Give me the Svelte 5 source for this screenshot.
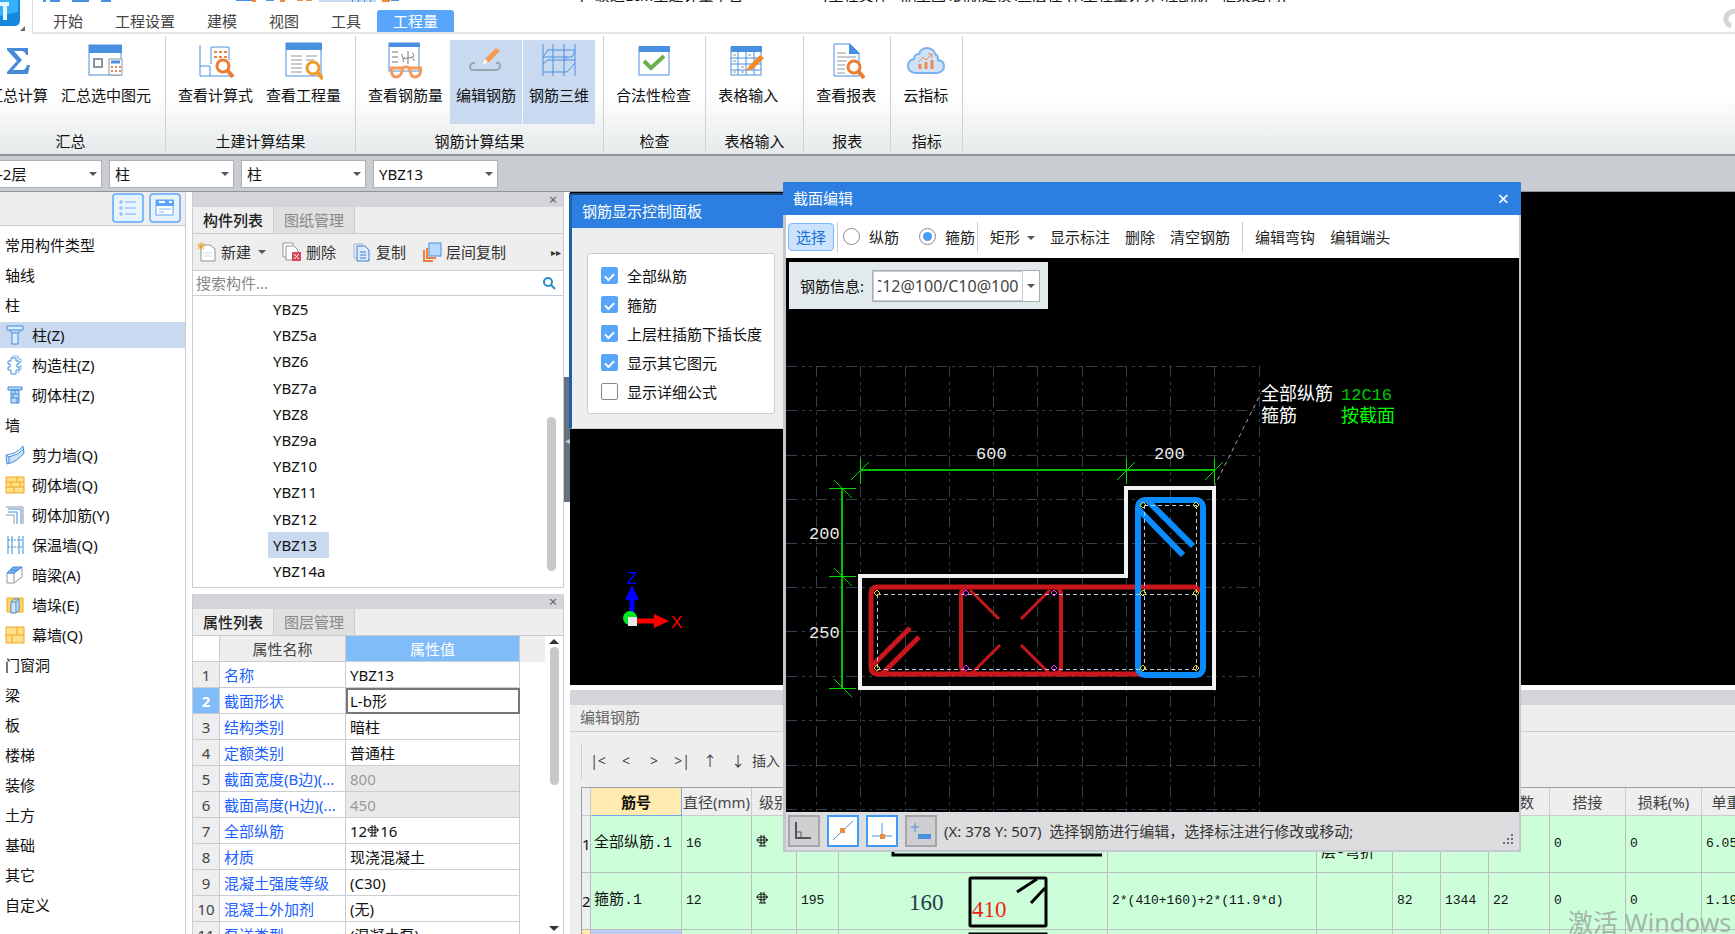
<script>
    import { onMount } from 'svelte'

    const tabs = ['开始', '工程设置', '建模', '视图', '工具', '工程量']

    const ribbon = [
        { title: '汇总', items: [['sigma', '汇总计算'], ['sumSel', '汇总选中图元']] },
        { title: '土建计算结果', items: [['formula', '查看计算式'], ['quantity', '查看工程量']] },
        { title: '钢筋计算结果', items: [['glasses', '查看钢筋量'], ['editBar', '编辑钢筋', true], ['bar3d', '钢筋三维', true]] },
        { title: '检查', items: [['check', '合法性检查']] },
        { title: '表格输入', wide: true, items: [['table', '表格输入']] },
        { title: '报表', items: [['report', '查看报表']] },
        { title: '指标', items: [['cloud', '云指标']] }
    ]

    const filters = [
        ['楼层', '-2层'],
        ['类别', '柱'],
        ['构件类型', '柱'],
        ['构件', 'YBZ13']
    ]

    const nav = [
        { text: '常用构件类型' },
        { text: '轴线' },
        { text: '柱' },
        { text: '柱(Z)', icon: 'col', active: true },
        { text: '构造柱(Z)', icon: 'tieCol' },
        { text: '砌体柱(Z)', icon: 'brickCol' },
        { text: '墙' },
        { text: '剪力墙(Q)', icon: 'shear' },
        { text: '砌体墙(Q)', icon: 'brick' },
        { text: '砌体加筋(Y)', icon: 'reinf' },
        { text: '保温墙(Q)', icon: 'insul' },
        { text: '暗梁(A)', icon: 'beam' },
        { text: '墙垛(E)', icon: 'pier' },
        { text: '幕墙(Q)', icon: 'curtain' },
        { text: '门窗洞' },
        { text: '梁' },
        { text: '板' },
        { text: '楼梯' },
        { text: '装修' },
        { text: '土方' },
        { text: '基础' },
        { text: '其它' },
        { text: '自定义' }
    ]

    const members = ['YBZ5', 'YBZ5a', 'YBZ6', 'YBZ7a', 'YBZ8', 'YBZ9a', 'YBZ10', 'YBZ11', 'YBZ12', 'YBZ13', 'YBZ14a']

    const props = [
        ['名称', 'YBZ13'],
        ['截面形状', 'L-b形'],
        ['结构类别', '暗柱'],
        ['定额类别', '普通柱'],
        ['截面宽度(B边)(...', '800', true],
        ['截面高度(H边)(...', '450', true],
        ['全部纵筋', '12', false, '16'],
        ['材质', '现浇混凝土'],
        ['混凝土强度等级', '(C30)'],
        ['混凝土外加剂', '(无)'],
        ['泵送类型', '(混凝土泵)']
    ]

    let layers = $state([
        { text: '全部纵筋', on: true },
        { text: '箍筋', on: true },
        { text: '上层柱插筋下插长度', on: true },
        { text: '显示其它图元', on: true },
        { text: '显示详细公式', on: false }
    ])

    let selected = $state('YBZ13')
    let barType = $state('箍筋')
    let barInfo = $state('C12@100/C10@100')
    let infoNode

    const gridX = [816, 860, 905, 949, 993, 1037, 1082, 1126, 1170, 1214, 1259]
    const gridY = [366, 410, 455, 499, 543, 587, 631, 676, 720, 765, 809]
    const corners = [[877, 593], [877, 668], [1143, 505], [1196, 505], [1143, 593], [1196, 593], [1143, 668], [1196, 668]]
    const middles = [[966, 593], [1054, 593], [966, 668], [1054, 668]]

    // keep the end of the rebar text in view, the box is narrower than it
    onMount(() => {
        infoNode.scrollLeft = infoNode.scrollWidth
    })
</script>

{#snippet glass(x, y, r, c)}
    <circle cx={x} cy={y} r={r} fill="#fff" stroke={c} stroke-width="3" />
    <path d="M{x + r - 1} {y + r - 1}l5 6" stroke={c} stroke-width="4" />
{/snippet}

{#snippet ribbonIcon(name)}
    <svg class="big-icon" viewBox="0 0 38 38" fill="none" aria-hidden="true">
        {#if name === 'sigma'}
            <path d="M8 6H29V13H27C26 10 25 9 22 9H15L23 18L14 28H23C26 28 27 26 28 23H31L29 32H8V30L18 19L8 8Z" fill="#4a8bd8" />
        {:else if name === 'sumSel'}
            <rect x="2" y="3" width="32" height="30" fill="#fff" stroke="#4a90e0" />
            <rect x="2" y="3" width="33" height="8" fill="#4a90e0" />
            <rect x="7" y="17" width="8" height="8" stroke="#8c969e" stroke-width="2" />
            <rect x="22" y="17" width="13" height="16" fill="#fff" stroke="#8c969e" />
            <path d="M24 20H33" stroke="#4a90e0" stroke-width="3" />
            <path d="M24 25h2m2 0h2m2 0h2m-10 4h2m2 0h2m2 0h2" stroke="#e08a60" stroke-width="2" />
        {:else if name === 'formula'}
            <path d="M3 3V34H34V32M3 24H13V34M14 22V5H32V18" stroke="#4a90e0" />
            <path d="M17 10h3m2 0h3m2 0h3m-13 5h3m2 0h3m2 0h3" stroke="#f08040" stroke-width="2" />
            {@render glass(26, 24, 6, '#ee7b30')}
        {:else if name === 'quantity'}
            <rect x="1" y="1" width="35" height="33" fill="#fff" stroke="#4a90e0" />
            <rect x="1" y="1" width="36" height="7" fill="#4a90e0" />
            <path d="M6 14H17M21 14H32M6 18H17M21 18H29M6 22H17M6 26H17M6 30H17" stroke="#8c969e" />
            {@render glass(28, 26, 6, '#f09a28')}
        {:else if name === 'glasses'}
            <rect x="2" y="1" width="30" height="28" fill="#fff" stroke="#4a90e0" />
            <rect x="2" y="1" width="31" height="4" fill="#4a90e0" />
            <path d="M5 10H11M5 15H11M5 20H11M21 9V22M15 12C15 17 17 17 21 16S27 15 27 19M17 20C15 18 16 15 18 16M25 11C28 12 27 16 24 15" stroke="#6e7880" />
            <path d="M3 26H15Q19 24 23 26H35M4 27L5 32Q6 35 9 35T14 32L16 27M22 27L24 32Q25 35 28 35T33 32L34 27" stroke="#f59a5a" stroke-width="3" />
        {:else if name === 'editBar'}
            <path d="M8 21H6Q3 22 3 25T7 28H28Q33 28 33 24T29 21" stroke="#9aa5b2" stroke-width="2" />
            <path d="M15 22L18 17L29 6L33 9L22 20Z" fill="#f59a55" />
            <path d="M15 23L18 17L21 20Z" fill="#fff" />
        {:else if name === 'bar3d'}
            <path d="M3 2V34M13 2V34M24 2V34M35 2V34M7 8H35M3 15H32L35 9M3 22L8 18H35M3 30H27L35 21M3 15L8 8M27 15L24 19" stroke="#4a90e0" />
        {:else if name === 'check'}
            <rect x="4" y="5" width="30" height="28" fill="#fff" stroke="#4a90e0" />
            <rect x="4" y="4" width="31" height="6" fill="#4a90e0" />
            <path d="M9 19L16 26L29 14" stroke="#6aaf50" stroke-width="4" />
        {:else if name === 'table'}
            <rect x="2" y="5" width="30" height="28" fill="#fff" stroke="#4a90e0" />
            <rect x="2" y="4" width="31" height="6" fill="#4a90e0" />
            <path d="M2 16H32M2 22H32M2 28H32M9 10V33M17 10V33M25 10V33" stroke="#4a90e0" />
            <path d="M4 13h3m12 0h3m-18 6h3m5 6h3m-11 5h3m5 0h3" stroke="#8c969e" />
            <path d="M17 29L20 24L31 13L35 16L24 27Z" fill="#f08a24" />
        {:else if name === 'report'}
            <path d="M7 2H23L32 11V34H7Z" fill="#fff" stroke="#4a90e0" />
            <path d="M22 1V12H33Z" fill="#4a90e0" />
            <path d="M10 11H19M10 15H29M10 19H20M10 23H18M10 27H18M10 31H18" stroke="#8c969e" />
            {@render glass(27, 25, 6, '#ee7b30')}
        {:else}
            <path d="M8 31Q1 30 1 24T7 17Q7 12 12 12Q14 6 20 6T29 13Q31 13 31 18Q37 19 37 24T31 31Z" fill="#cfe2f8" stroke="#7db1ee" stroke-width="2" />
            <path d="M13 27V22M19 27V20M25 27V18" stroke="#ee8a50" stroke-width="3" />
            <path d="M12 20L16 15L19 18L25 12M21 12H25V16" stroke="#ee8a50" />
        {/if}
    </svg>
{/snippet}

{#snippet navIcon(name)}
    <svg class="nav-icon" viewBox="0 0 20 20" fill="none" stroke="#3f8ddb" aria-hidden="true">
        {#if name === 'col'}
            <path d="M2 1H18V5H2ZM7 8H13V19H7ZM4 5L7 8M16 5L13 8" fill="#dcebfb" />
        {:else if name === 'tieCol'}
            <path d="M6 3H11V6H14V9H12V12H14V15H11V19H6V15H3V12H5V9H3V6H6Z" fill="#fff" />
            <path d="M6 3L8 1H13V4H16V7L14 9M14 12L16 10V14L13 18" stroke="#7db1ee" />
        {:else if name === 'brickCol'}
            <path d="M3 2H17V5H3ZM6 5H14V18H6ZM6 9H14M6 13H14M10 5V9M8 9V13M12 13V18" fill="#bcd9f8" />
        {:else if name === 'shear'}
            <path d="M1 10Q12 9 18 1L19 8Q12 17 2 19ZM1 10L4 12Q13 10 19 4M4 12V18" fill="#cfe2f8" />
        {:else if name === 'brick'}
            <path d="M1 2H19V18H1ZM1 7H19M1 12H19M12 2V7M6 7V12M15 7V12M9 12V18" fill="#ffe08a" stroke="#f3a51c" />
        {:else if name === 'reinf'}
            <path d="M1 2H18V19M1 10H9V19" stroke="#8c969e" />
            <path d="M3 4H16V19M3 7H12V19" />
        {:else if name === 'insul'}
            <path d="M3 1V19M7 1V19M14 1V19M18 1V19" />
            <path d="M3 5H18M3 12H18" stroke-dasharray="2 1" />
        {:else if name === 'beam'}
            <path d="M2 8H9V18H2ZM9 8L17 2V12L9 18" fill="#fff" stroke="#8c969e" />
            <path d="M2 8L8 2H17L9 8ZM6 5H13" fill="#7db1ee" />
        {:else if name === 'pier'}
            <path d="M2 3H18V17H2Z" fill="#ffd463" stroke="#f3a51c" />
            <path d="M6 7L9 4H14V15L11 18H6ZM11 7V18M6 7H11L14 4" fill="#cfe2f8" />
        {:else}
            <path d="M1 2H19V18H1ZM1 10H19M12 2V10M7 10V18" fill="#ffe08a" stroke="#f3a51c" />
        {/if}
    </svg>
{/snippet}

{#snippet rebar()}
    <svg class="rebar" viewBox="0 0 13 13" fill="none" stroke="#111" aria-label="HRB400">
        <path d="M5 1V12M8 1V12M3 12H10" />
        <ellipse cx="6" cy="6" rx="5" ry="3" />
        <path d="M1 6H12" />
    </svg>
{/snippet}

{#snippet dockTabs(a, b)}
    <div class="dock-head"><button class="dock-close" aria-label="关闭">×</button></div>
    <div class="dock-tabs">
        <button class="dock-tab on">{a}</button>
        <button class="dock-tab">{b}</button>
    </div>
{/snippet}

<div class="app">
    <header>
        <div class="titlebar">
            <svg class="quick" viewBox="0 0 410 2" aria-hidden="true">
                <path d="M319 0H376V2H319Z" fill="#c8d9f0" />
                <path d="M43 0h3v2h-3zM50 0h10v2h-10zM72 0h17v2h-17zM101 0h10v2h-10zM236 0h16v1h-16zM266 0h8v1h-8zM352 0h1v2h-1zM358 0h1v2h-1zM364 0h1v2h-1zM370 0h1v2h-1zM391 0h8v1h-8z" fill="#4a90e0" />
                <path d="M252 0h4v2h-4zM280 0h5v2h-5zM297 0h6v1h-6zM306 0h6v1h-6zM382 0h8v2h-8z" fill="#f08a3c" />
            </svg>
            <span class="title">广联达BIM土建计量平台</span>
            <span>[工程文件 - 施工图\钢筋建模\三层住宅\工程量计算\柱配筋 - 框架结构]</span>
        </div>
        <div class="tabs">
            {#each tabs as tab}
                <button class="tab" class:on={tab === '工程量'}>{tab}</button>
            {/each}
            <svg class="help" viewBox="0 0 12 24" fill="none" aria-hidden="true">
                <path d="M12 3Q3 4 3 11Q3 16 8 18" stroke="#d5d5d5" stroke-width="5" />
            </svg>
        </div>
        <svg class="logo" viewBox="0 0 32 34" aria-hidden="true">
            <path d="M0 0H20V20Q20 26 14 26H0Z" fill="#1687dc" />
            <path d="M0 0H18V12L0 16Z" fill="#36b1f5" />
            <path d="M0 2H9V6H7V20H3V6H0Z" fill="#e4f6ff" />
            <path d="M25 26V31H20Z" fill="#666" />
        </svg>
    </header>

    <div class="ribbon">
        {#each ribbon as group}
            <section class="group" class:wide={group.wide}>
                <div class="group-items">
                    {#each group.items as [icon, label, on]}
                        <button class="tool" class:on>
                            {@render ribbonIcon(icon)}
                            <span>{label}</span>
                        </button>
                    {/each}
                </div>
                <div class="group-title">{group.title}</div>
            </section>
        {/each}
    </div>

    <div class="filters">
        {#each filters as [name, value]}
            <div class="select">
                <select aria-label={name}><option>{value}</option></select>
            </div>
        {/each}
    </div>

    <main>
        <nav>
            <div class="nav-head">
                <button aria-label="列表视图">
                    <svg viewBox="0 0 20 20" fill="none" stroke="#6fb0f8" aria-hidden="true">
                        <path d="M7 4H18M7 10H18M7 16H18" />
                        <path d="M2 3h2v2h-2zM2 9h2v2h-2zM2 15h2v2h-2z" />
                    </svg>
                </button>
                <button aria-label="窗口视图">
                    <svg viewBox="0 0 20 20" fill="none" aria-hidden="true">
                        <rect x="1" y="2" width="17" height="15" fill="#fff" stroke="#58a5fb" />
                        <path d="M1 5H19" stroke="#58a5fb" stroke-width="6" />
                        <path d="M4 4h6m4 0h3" stroke="#fff" stroke-width="2" />
                        <path d="M4 11H16M4 14H9" stroke="#7db8fa" />
                    </svg>
                </button>
            </div>
            <ul>
                {#each nav as item}
                    <li class:active={item.active}>
                        {#if item.icon}{@render navIcon(item.icon)}{/if}
                        <span>{item.text}</span>
                    </li>
                {/each}
            </ul>
        </nav>

        <aside>
            <section class="dock members">
                {@render dockTabs('构件列表', '图纸管理')}
                <div class="dock-tools">
                    <button>
                        <svg viewBox="0 0 20 20" fill="none" aria-hidden="true">
                            <path d="M4 3H13L18 7V19H4Z" fill="#fff" stroke="#8c969e" />
                            <path d="M7 11H15M7 14H15" stroke="#d5d9dc" />
                            <path d="M4 0V8M0 4H8M1 1L7 7M7 1L1 7" stroke="#f59a1c" />
                        </svg>新建<i class="caret"></i>
                    </button>
                    <button>
                        <svg viewBox="0 0 20 20" fill="none" aria-hidden="true">
                            <path d="M4 15H1V1H11V3M4 4H12L16 8V18H4Z" fill="#fff" stroke="#8c969e" />
                            <rect x="10" y="10" width="9" height="9" fill="#d8485a" />
                            <path d="M12 12L17 17M17 12L12 17" stroke="#fff" />
                        </svg>删除
                    </button>
                    <button>
                        <svg viewBox="0 0 20 20" fill="none" stroke="#3c7fd6" aria-hidden="true">
                            <path d="M5 16H2V2H11" stroke="#9cb8dc" />
                            <path d="M5 4H13L17 8V19H5Z" fill="#dcebfb" />
                            <path d="M8 10H14M8 13H14M8 16H14" />
                        </svg>复制
                    </button>
                    <button>
                        <svg viewBox="0 0 20 20" fill="none" aria-hidden="true">
                            <path d="M2 8V19H11M5 6V16H14" stroke="#f08040" stroke-width="2" />
                            <rect x="7" y="1" width="12" height="13" fill="#b9d8fb" stroke="#4a90e0" />
                        </svg>层间复制
                    </button>
                    <span class="more">▸▸</span>
                </div>
                <label class="search">
                    <input type="text" placeholder="搜索构件..." aria-label="搜索构件" />
                    <svg viewBox="0 0 14 14" fill="none" stroke="#2d8cc8" stroke-width="2" aria-hidden="true">
                        <circle cx="6" cy="6" r="4" />
                        <path d="M9 9L13 13" />
                    </svg>
                </label>
                <div class="member-body">
                    <ul>
                        {#each members as m}
                            <li><button class:on={m === selected} onclick={() => (selected = m)}>{m}</button></li>
                        {/each}
                    </ul>
                    <div class="scroll"><i></i></div>
                </div>
            </section>

            <section class="dock props">
                {@render dockTabs('属性列表', '图层管理')}
                <div class="props-body">
                    <div class="props-main">
                        <table>
                            <thead>
                                <tr><th class="no"></th><th class="key">属性名称</th><th class="val">属性值</th><th></th></tr>
                            </thead>
                            <tbody>
                                {#each props as [key, val, locked, tail], i}
                                    <tr class:on={i === 1}>
                                        <td class="no">{i + 1}</td>
                                        <td class="key">{key}</td>
                                        <td class="val" class:locked>{val}{#if tail}{@render rebar()}{tail}{/if}</td>
                                        <td class="blank"></td>
                                    </tr>
                                {/each}
                            </tbody>
                        </table>
                    </div>
                    <div class="props-scroll">
                        <b class="up"></b>
                        <i></i>
                        <b class="down"></b>
                    </div>
                </div>
            </section>
        </aside>

        <div class="splitter"><button aria-label="收起">◂</button></div>

        <div class="stage">
            <div class="viewport">
                <svg class="axis" viewBox="0 0 70 70" fill="none" aria-hidden="true">
                    <text x="14" y="16" fill="#0000ff">Z</text>
                    <path d="M19 54V30" stroke="#0000ff" stroke-width="5" />
                    <path d="M12 32L19 17L26 32Z" fill="#0000ff" />
                    <circle cx="17" cy="50" r="7" fill="#00e820" />
                    <path d="M22 53H42" stroke="#ff0000" stroke-width="5" />
                    <path d="M41 46L56 53L41 60Z" fill="#ff0000" />
                    <rect x="15" y="49" width="9" height="9" fill="#e8e8e8" />
                    <text x="58" y="60" fill="#ff0000">X</text>
                </svg>
            </div>

            <section class="editor">
                <div class="dock-head"></div>
                <div class="editor-title">编辑钢筋</div>
                <div class="editor-tools">
                    <button>|&lt;</button>
                    <button>&lt;</button>
                    <button>&gt;</button>
                    <button>&gt;|</button>
                    <button>↑</button>
                    <button>↓</button>
                    <button>插入</button>
                </div>
                <div class="sheet">
                    <table>
                        <colgroup>
                            <col class="w-no" /><col class="w-name" /><col class="w-dia" /><col class="w-grade" /><col class="w-code" />
                            <col class="w-shape" /><col class="w-formula" /><col class="w-desc" /><col class="w-len" /><col class="w-len" />
                            <col class="w-count" /><col class="w-desc" /><col class="w-desc" /><col class="w-desc" />
                        </colgroup>
                        <thead>
                            <tr>
                                <th></th><th class="name">筋号</th><th>直径(mm)</th><th>级别</th><th>图号</th><th>图形</th><th>计算公式</th>
                                <th>公式描述</th><th>弯曲</th><th>长度</th><th>根数</th><th>搭接</th><th>损耗(%)</th><th>单重(kg)</th>
                            </tr>
                        </thead>
                        <tbody>
                            <tr>
                                <td class="no">1</td><td class="name">全部纵筋.1</td><td>16</td><td>{@render rebar()}</td><td></td>
                                <td class="shape">
                                    <svg viewBox="0 0 268 56" fill="none" aria-hidden="true"><path d="M54 36V39H263" stroke="#000" stroke-width="3" /></svg>
                                </td>
                                <td></td><td class="desc">层高-本<br />层-弯折</td><td></td><td></td><td></td><td>0</td><td>0</td><td>6.05</td>
                            </tr>
                            <tr>
                                <td class="no">2</td><td class="name">箍筋.1</td><td>12</td><td>{@render rebar()}</td><td>195</td>
                                <td class="shape">
                                    <svg viewBox="0 0 268 56" fill="none" stroke="#000" stroke-width="3">
                                        <rect x="131" y="5" width="76" height="48" rx="1" />
                                        <path d="M178 19L198 6M206 15L192 30" />
                                        <text x="70" y="37" stroke="none" fill="#223a4a">160</text>
                                        <text x="133" y="44" stroke="none" fill="#f02020">410</text>
                                    </svg>
                                </td>
                                <td>2*(410+160)+2*(11.9*d)</td><td></td><td>82</td><td>1344</td><td>22</td><td>0</td><td>0</td><td>1.193</td>
                            </tr>
                            <tr class="current">
                                <td class="no"></td><td class="name"></td><td></td><td></td><td></td>
                                <td class="shape">
                                    <svg viewBox="0 0 268 56" fill="none" aria-hidden="true"><path d="M131 20V4H207V20" stroke="#000" stroke-width="3" /></svg>
                                </td>
                                <td></td><td></td><td></td><td></td><td></td><td></td><td></td><td></td>
                            </tr>
                        </tbody>
                    </table>
                </div>
            </section>
        </div>
    </main>

    <section class="window layers">
        <h2>钢筋显示控制面板</h2>
        <div class="layers-body">
            <div class="box">
                {#each layers as layer}
                    <label><input type="checkbox" bind:checked={layer.on} />{layer.text}</label>
                {/each}
            </div>
        </div>
    </section>

    <section class="window section-edit">
        <h2>截面编辑<button aria-label="关闭">×</button></h2>
        <div class="section-tools">
            <button class="pick">选择</button>
            <div class="radios">
                {#each ['纵筋', '箍筋'] as t}
                    <label><input type="radio" name="bar" value={t} bind:group={barType} />{t}</label>
                {/each}
            </div>
            <div class="actions">
                <button>矩形<i class="caret"></i></button>
                <button>显示标注</button>
                <button>删除</button>
                <button>清空钢筋</button>
            </div>
            <div class="actions">
                <button>编辑弯钩</button>
                <button>编辑端头</button>
            </div>
        </div>
        <div class="drawing">
            <svg class="plan" viewBox="786 258 733 554" fill="none">
                <g stroke="#353f4b" stroke-dasharray="11 5 3 4 3 4" shape-rendering="crispEdges">
                    {#each gridX as x}<path d="M{x} 366V812" />{/each}
                    {#each gridY as y}<path d="M786 {y}H1259" />{/each}
                </g>
                <path d="M1214 487L1261 393" stroke="#aaa" stroke-dasharray="4 4" />
                <g stroke="#00d800">
                    <path d="M860 470H1214M842 488V688" stroke="#00c000" stroke-width="2" />
                    <path d="M860 458V484M1126 458V484M1214 458V484M829 488H856M829 576H856M829 688H856" shape-rendering="crispEdges" />
                    <path d="M851 480L869 462M1117 480L1135 462M1205 480L1223 462M834 480L852 498M834 568L852 586M834 679L852 697" />
                </g>
                <path d="M860 576H1126V488H1214V688H860Z" stroke="#f2f2f2" stroke-width="4" />
                <g stroke="#c8161d" stroke-width="5">
                    <path d="M1198 592Q1198 587 1194 587H878Q871 587 871 594V667Q871 674 878 674H1143" />
                    <path d="M873 665L910 628M882 674L919 637" />
                    <rect x="961" y="587" width="100" height="87" rx="7" stroke-width="4" />
                    <path d="M970 590L999 619M1050 590L1021 619M971 674L1000 645M1050 674L1021 645" stroke-width="3" />
                </g>
                <g stroke="#0a8cff" stroke-width="6">
                    <rect x="1138" y="500" width="65" height="175" rx="7" />
                    <path d="M1146 499L1193 546M1139 510L1183 555" />
                </g>
                <path d="M877 594H1196M877 669H1196M877 594V669M1144 505V669M1196 505V669M1144 505H1196" stroke="#b4cbe2" stroke-dasharray="4 3" shape-rendering="crispEdges" />
                {#each corners as [x, y]}<path d="M{x} {y - 3}l3 3l-3 3l-3 -3z" stroke="#e8d020" />{/each}
                {#each middles as [x, y]}<path d="M{x} {y - 3}l3 3l-3 3l-3 -3z" stroke="#ff20ff" />{/each}
                <g class="dim" fill="#ececec">
                    <text x="976" y="459">600</text>
                    <text x="1154" y="459">200</text>
                    <text x="809" y="539">200</text>
                    <text x="809" y="638">250</text>
                </g>
                <text class="note" x="1261" y="400" fill="#fff">全部纵筋</text>
                <text class="note" x="1261" y="422" fill="#fff">箍筋</text>
                <text class="note" x="1341" y="422" fill="#00ff00">按截面</text>
                <text class="dim" x="1341" y="400" fill="#00c800">12C16</text>
            </svg>
            <div class="info">
                <label for="bar-info">钢筋信息:</label>
                <div class="combo">
                    <input id="bar-info" type="text" bind:value={barInfo} bind:this={infoNode} />
                    <button aria-label="展开"><i class="caret"></i></button>
                </div>
            </div>
        </div>
        <footer>
            <button class="snap" aria-label="正交">
                <svg viewBox="0 0 28 28" fill="none" stroke="#555" aria-hidden="true"><path d="M6 5V21H21" stroke-width="2" /><path d="M6 15H11V21" /></svg>
            </button>
            <button class="snap on" aria-label="中点">
                <svg viewBox="0 0 28 28" fill="none" aria-hidden="true"><path d="M4 23L24 4" stroke="#4a90e0" /><rect x="11" y="11" width="5" height="5" fill="#f08a3c" /></svg>
            </button>
            <button class="snap on" aria-label="垂足">
                <svg viewBox="0 0 28 28" fill="none" aria-hidden="true"><path d="M14 6V20M4 19H24" stroke="#4a90e0" /><rect x="12" y="17" width="5" height="5" fill="#f08a3c" /></svg>
            </button>
            <button class="snap" aria-label="动态输入">
                <svg viewBox="0 0 28 28" fill="none" aria-hidden="true"><path d="M8 6V15M4 10H12" stroke="#4a90e0" /><rect x="11" y="17" width="13" height="5" fill="#4a90e0" /></svg>
            </button>
            <span>(X: 378 Y: 507)&nbsp; 选择钢筋进行编辑，选择标注进行修改或移动;</span>
            <svg class="grip" viewBox="0 0 12 12" fill="#6b7076" aria-hidden="true"><path d="M9 0h2v2h-2zM9 4h2v2h-2zM5 4h2v2h-2zM9 8h2v2h-2zM5 8h2v2h-2zM1 8h2v2h-2z" /></svg>
        </footer>
    </section>

    <div class="watermark">激活 Windows</div>
</div>

<style>
    :global(body) {
        margin: 0;
    }

    .app {
        position: relative;
        display: flex;
        flex-direction: column;
        height: 100vh;
        overflow: hidden;
        background: #fff;
        color: #111;
        font: 15px/20px "Noto Sans", "Noto Sans CJK SC", sans-serif;
    }

    button,
    input,
    select {
        box-sizing: border-box;
        margin: 0;
        padding: 0;
        border: 0;
        background: none;
        color: inherit;
        font: inherit;
        white-space: nowrap;
    }

    ul {
        margin: 0;
        padding: 0;
        list-style: none;
    }

    table {
        border-collapse: separate;
        border-spacing: 0;
        table-layout: fixed;
    }

    .caret {
        display: inline-block;
        border: 4px solid transparent;
        border-top-color: #555;
        border-bottom: 0;
    }

    /* header and ribbon */
    header {
        position: relative;
        border-bottom: 2px solid #e6e6e6;
    }

    .titlebar {
        display: flex;
        align-items: flex-end;
        gap: 80px;
        height: 2px;
        overflow: hidden;
        line-height: 14px;
        white-space: nowrap;
    }

    .quick {
        width: 410px;
        height: 2px;
    }

    .title {
        padding-left: 90px;
    }

    .tabs {
        display: flex;
        align-items: flex-end;
        height: 30px;
        padding-left: 37px;
    }

    .tab {
        height: 22px;
        padding: 0 16px;
        border-radius: 3px 3px 0 0;
        color: #444;
    }

    .tab.on {
        background: #58a5fb;
        color: #fff;
    }

    .help {
        width: 12px;
        height: 24px;
        margin-left: auto;
    }

    .logo {
        position: absolute;
        left: 0;
        top: 0;
        width: 32px;
        height: 34px;
        border-right: 1px solid #ddd;
        background: #fff;
    }

    .ribbon {
        display: flex;
        height: 120px;
        margin-left: -24px;
        border-bottom: 2px solid #8f9499;
        background: linear-gradient(#fff 50%, #e6eaea);
    }

    .group {
        display: flex;
        flex-direction: column;
        justify-content: space-between;
        margin: 2px 0 3px;
        padding: 4px 8px 0 6px;
        border-right: 1px solid #cfd2d4;
    }

    .wide {
        min-width: 83px;
    }

    .group-items {
        display: flex;
        gap: 1px;
    }

    .tool {
        display: flex;
        flex-direction: column;
        align-items: center;
        gap: 5px;
        height: 84px;
        padding: 2px 6px 0;
    }

    .tool.on {
        background: #c8d9f0;
    }

    .big-icon {
        width: 38px;
        height: 38px;
    }

    .group-title {
        padding-left: 2px;
        text-align: center;
    }

    .filters {
        display: flex;
        align-items: center;
        gap: 7px;
        height: 35px;
        margin-left: -23px;
        border-bottom: 1px solid #8f9499;
        background: #c9ccd0;
    }

    .select {
        position: relative;
        width: 125px;
    }

    .select::after {
        content: '';
        position: absolute;
        right: 5px;
        top: 12px;
        border: 4px solid transparent;
        border-top-color: #555;
        border-bottom: 0;
        pointer-events: none;
    }

    .select select {
        width: 100%;
        height: 28px;
        padding: 0 5px;
        border: 1px solid #aeb1b4;
        background: #fff;
        appearance: none;
    }

    .select:first-child select {
        padding-left: 20px;
    }

    main {
        display: flex;
        flex: 1;
        min-height: 0;
    }

    /* component type tree */
    nav {
        width: 185px;
        border-right: 1px solid #c9ccd2;
    }

    .nav-head {
        display: flex;
        justify-content: flex-end;
        gap: 5px;
        height: 32px;
        padding: 1px 4px 0 0;
        border-bottom: 1px solid #c9ccd2;
        background: #eee;
    }

    .nav-head button {
        display: grid;
        place-items: center;
        width: 32px;
        height: 30px;
        border: 2px solid #7db8fa;
        border-radius: 4px;
        background: #e9f3fe;
    }

    .nav-head svg {
        width: 20px;
        height: 20px;
    }

    nav ul {
        display: grid;
        gap: 4px;
        padding-top: 6px;
    }

    nav li {
        display: flex;
        align-items: center;
        gap: 7px;
        height: 26px;
        padding-left: 5px;
    }

    nav li.active {
        background: #c8d9f0;
    }

    .nav-icon {
        width: 20px;
        height: 20px;
    }

    /* docked panels */
    aside {
        display: flex;
        flex-direction: column;
        gap: 6px;
        width: 372px;
        margin-left: 6px;
    }

    .dock {
        display: flex;
        flex-direction: column;
        box-sizing: border-box;
        border: 1px solid #c9ccd2;
        border-top: 0;
        min-height: 0;
    }

    .members {
        height: 396px;
    }

    .props {
        flex: 1;
        border-bottom: 0;
    }

    .dock-head {
        display: flex;
        justify-content: flex-end;
        height: 15px;
        background: #d3d5da;
    }

    .dock-close {
        width: 20px;
        color: #666;
        line-height: 15px;
    }

    .dock-tabs {
        display: flex;
        height: 26px;
        border-bottom: 1px solid #c9ccd2;
        background: #eee;
    }

    .dock-tab {
        padding: 0 10px;
        border-right: 1px solid #c9ccd2;
        background: #e0e0e0;
        color: #888;
    }

    .dock-tab.on {
        background: #eee;
        color: #222;
        font-weight: 500;
    }

    .dock-tools {
        display: flex;
        align-items: center;
        gap: 16px;
        height: 36px;
        padding: 0 2px 0 4px;
        border-bottom: 1px solid #c9ccd2;
        background: #eee;
        color: #333;
    }

    .dock-tools button {
        display: flex;
        align-items: center;
        gap: 4px;
    }

    .dock-tools svg {
        width: 20px;
        height: 20px;
    }

    .dock-tools .caret {
        margin-left: 3px;
    }

    .more {
        margin-left: auto;
        font-size: 10px;
    }

    .search {
        display: flex;
        align-items: center;
        height: 24px;
        padding: 0 7px 0 3px;
        border-bottom: 1px solid #c9ccd2;
    }

    .search input {
        flex: 1;
        outline: 0;
    }

    .search input::placeholder {
        color: #888;
        opacity: 1;
    }

    .search svg {
        width: 14px;
        height: 14px;
    }

    .member-body {
        display: flex;
        flex: 1;
        justify-content: space-between;
        min-height: 0;
    }

    .member-body ul {
        display: flex;
        flex-direction: column;
        padding: 0 0 3px 75px;
    }

    .member-body li {
        display: flex;
        flex: 1;
    }

    .member-body button {
        padding: 0 12px 0 5px;
    }

    .member-body button.on {
        background: #c8d9f0;
    }

    .scroll {
        padding: 121px 7px 0 0;
    }

    .scroll i {
        display: block;
        width: 9px;
        height: 154px;
        border-radius: 5px;
        background: #c8c8c8;
    }

    .props-body {
        display: flex;
        flex: 1;
        justify-content: space-between;
        min-height: 0;
        overflow: hidden;
    }

    .props-main table {
        width: 352px;
    }

    .props th,
    .props td {
        box-sizing: border-box;
        height: 26px;
        padding: 0 0 0 4px;
        border-right: 1px solid #c9ccd2;
        border-bottom: 1px solid #c9ccd2;
        text-align: left;
        white-space: nowrap;
        overflow: hidden;
    }

    .props th {
        padding: 0;
        background: #eee;
        color: #444;
        font-weight: 400;
        text-align: center;
    }

    .props th:last-child {
        border: 0;
    }

    .props th.no {
        width: 27px;
        background: #fff;
    }

    .props th.key {
        width: 126px;
    }

    .props th.val {
        width: 174px;
        background: #80bbfa;
        color: #fff;
    }

    .props td.no {
        padding: 0;
        background: #eee;
        color: #444;
        text-align: center;
    }

    .props td.key {
        color: #2060ff;
    }

    .props td.locked {
        background: #e9e9e9;
        color: #999;
    }

    .props td.blank {
        border: 0;
    }

    .props .on td.no {
        background: #80bbfa;
        color: #fff;
        font-weight: 700;
    }

    .props .on td.val {
        padding-left: 2px;
        border: 2px solid #777;
    }

    .props-scroll {
        display: flex;
        flex-direction: column;
        align-items: center;
        width: 18px;
        padding: 3px 0;
    }

    .props-scroll i {
        width: 9px;
        height: 138px;
        margin-top: 3px;
        border-radius: 5px;
        background: #c8c8c8;
    }

    .up,
    .down {
        border: 5px solid transparent;
    }

    .up {
        border-bottom-color: #333;
        border-top: 0;
    }

    .down {
        margin-top: auto;
        border-top-color: #333;
        border-bottom: 0;
    }

    .rebar {
        width: 13px;
        height: 13px;
    }

    .splitter {
        width: 6px;
        padding-top: 185px;
    }

    .splitter button {
        width: 6px;
        height: 125px;
        background: #66707f;
        color: #c9ccd2;
        font-size: 10px;
    }

    /* 3d view and rebar table */
    .stage {
        display: flex;
        flex: 1;
        flex-direction: column;
        min-width: 0;
    }

    .viewport {
        display: flex;
        flex: 1;
        align-items: flex-end;
        padding: 0 0 47px 43px;
        background: #000;
    }

    .axis {
        width: 70px;
        height: 70px;
        font: 17px "Liberation Sans", sans-serif;
    }

    .editor {
        height: 244px;
        margin-top: 5px;
        background: #eee;
        overflow: hidden;
    }

    .editor-title {
        height: 26px;
        padding-left: 10px;
        border-bottom: 1px solid #c9ccd2;
        color: #666;
        line-height: 25px;
    }

    .editor-tools {
        display: flex;
        align-items: center;
        height: 36px;
        margin: 11px 0 8px 11px;
        padding-left: 2px;
        border-left: 1px solid #c9ccd2;
        color: #444;
    }

    .editor-tools button {
        min-width: 28px;
        font-size: 14px;
    }

    .sheet {
        margin-left: 11px;
        border: 1px solid #9a9ea4;
        border-right: 0;
        overflow: hidden;
    }

    .sheet table {
        width: 1192px;
    }

    .w-no { width: 9px; }
    .w-name { width: 91px; }
    .w-dia { width: 70px; }
    .w-grade { width: 45px; }
    .w-code { width: 42px; }
    .w-shape { width: 269px; }
    .w-formula { width: 209px; }
    .w-desc { width: 76px; }
    .w-len { width: 48px; }
    .w-count { width: 61px; }

    .sheet th {
        height: 27px;
        padding: 0;
        border-right: 1px solid #c9ccd2;
        border-bottom: 1px solid #c9ccd2;
        color: #444;
        font-weight: 400;
        white-space: nowrap;
    }

    .sheet th.name {
        border-color: #6fa8e8;
        background: #ffebb0;
        color: #111;
        font-weight: 700;
    }

    .sheet td {
        height: 56px;
        padding: 0 0 0 4px;
        border-right: 1px solid #bdbdbd;
        border-bottom: 1px solid #bdbdbd;
        background: #ccffd9;
        font-family: "Liberation Mono", "Noto Sans CJK SC", monospace;
        font-size: 13px;
        white-space: nowrap;
    }

    .sheet td.name {
        padding-left: 3px;
        font-size: 15px;
    }

    .sheet td.no {
        padding: 0;
        background: #eee;
        font-family: inherit;
        font-size: 15px;
    }

    .sheet td.desc {
        font-size: 15px;
    }

    .sheet td.shape {
        padding: 0;
    }

    .shape svg {
        display: block;
        width: 268px;
        height: 56px;
        font: 23px "Liberation Serif", serif;
    }

    .sheet .current td.name {
        background: #bccdf0;
    }

    .sheet .current td.no {
        background: #ffebb0;
    }

    /* floating windows */
    .window {
        position: absolute;
        box-sizing: border-box;
        background: #eee;
    }

    .window h2 {
        display: flex;
        justify-content: space-between;
        margin: 0;
        padding: 0 10px;
        background: #2c7fe0;
        color: #fff;
        font-size: 15px;
        font-weight: 400;
        line-height: 33px;
    }

    .window h2 button {
        padding: 0 2px;
        font-size: 20px;
        line-height: 33px;
    }

    .layers {
        left: 569px;
        top: 193px;
        width: 220px;
        border-top: 2px solid #154372;
        border-left: 3px solid #1c62a8;
        border-bottom: 1px solid #c9ccd2;
    }

    .layers-body {
        padding: 25px 15px 14px;
    }

    .box {
        width: 173px;
        padding: 7px 0 7px 13px;
        border: 1px solid #c9ccd2;
        border-radius: 3px;
        background: #fff;
    }

    .box label {
        display: flex;
        align-items: center;
        gap: 9px;
        height: 29px;
        white-space: nowrap;
    }

    .box input {
        width: 17px;
        height: 17px;
        border: 1px solid #888;
        border-radius: 2px;
        appearance: none;
    }

    .box input:checked {
        display: grid;
        place-items: center;
        border-color: #58a5fb;
        background: #58a5fb;
    }

    .box input:checked::after {
        content: '';
        width: 7px;
        height: 4px;
        border: solid #fff;
        border-width: 0 0 2px 2px;
        transform: rotate(-45deg);
    }

    .section-edit {
        left: 783px;
        top: 182px;
        width: 738px;
        border: solid #c3c7d0;
        border-width: 0 2px 2px 3px;
        background: #fff;
    }

    .section-edit h2 {
        margin: 0 -2px 0 -3px;
    }

    .section-tools {
        display: flex;
        align-items: center;
        height: 43px;
        padding-left: 2px;
    }

    .section-tools > div {
        display: flex;
        align-items: center;
        height: 30px;
        border-left: 1px solid #c9ccd2;
        color: #222;
    }

    .pick {
        height: 28px;
        margin-right: 3px;
        padding: 0 7px;
        border: 1px solid #7db8fa;
        border-radius: 4px;
        background: #cbe3fd;
        color: #1c6fd8;
    }

    .radios {
        gap: 20px;
        padding: 0 2px 0 5px;
    }

    .radios label {
        display: flex;
        align-items: center;
        gap: 9px;
    }

    .radios input {
        display: grid;
        place-items: center;
        width: 17px;
        height: 17px;
        border: 1px solid #888;
        border-radius: 50%;
        appearance: none;
    }

    .radios input:checked::after {
        content: '';
        width: 9px;
        height: 9px;
        border-radius: 50%;
        background: #4a9cf5;
    }

    .actions {
        gap: 15px;
        padding: 0 12px;
    }

    .actions .caret {
        margin-left: 7px;
        vertical-align: middle;
    }

    .drawing {
        position: relative;
        height: 554px;
        background: #000;
    }

    .plan {
        display: block;
        width: 733px;
        height: 554px;
    }

    .dim {
        font: 17px "Liberation Mono", monospace;
    }

    .note {
        font: 18px "Noto Sans CJK SC", sans-serif;
    }

    .info {
        position: absolute;
        left: 3px;
        top: 4px;
        display: flex;
        align-items: center;
        gap: 8px;
        height: 47px;
        padding: 0 8px 0 11px;
        background: #e2eaec;
        white-space: nowrap;
    }

    .combo {
        display: flex;
        border: 1px solid #a9adb1;
        background: #fff;
    }

    .combo input {
        width: 150px;
        height: 30px;
        padding: 0 4px;
        border: 1px solid #c9ccd2;
        color: #444;
        font-size: 16px;
        outline: 0;
    }

    .combo button {
        display: grid;
        place-items: center;
        width: 16px;
    }

    footer {
        display: flex;
        align-items: center;
        gap: 7px;
        height: 38px;
        padding: 0 5px 0 2px;
        background: #dddddf;
        color: #333;
    }

    footer span {
        flex: 1;
        white-space: nowrap;
    }

    .snap {
        width: 32px;
        height: 32px;
        border: 2px solid #a6a6aa;
        background: #cfcfd2;
    }

    .snap.on {
        border-color: #3f9bf8;
        background: #fff;
    }

    .snap svg {
        display: block;
        width: 28px;
        height: 28px;
    }

    .grip {
        align-self: flex-end;
        width: 12px;
        height: 12px;
        margin-bottom: 4px;
    }

    .watermark {
        position: absolute;
        left: 1568px;
        bottom: -4px;
        color: #a3b5a8;
        font-size: 25px;
        line-height: 32px;
        white-space: nowrap;
    }
</style>
